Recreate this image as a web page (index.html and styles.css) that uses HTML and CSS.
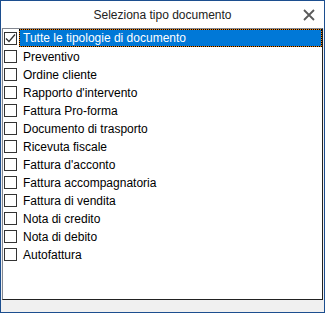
FILE: index.html
```html
<!DOCTYPE html>
<html lang="it">
<head>
<meta charset="UTF-8">
<title>Seleziona tipo documento</title>
<link rel="stylesheet" href="styles.css">
</head>
<body>
    <div class="window">
        <div class="title-bar">
            <span class="title">Seleziona tipo documento</span>
            <svg class="close-btn" width="12" height="12" viewBox="0 0 12 12">
                <path d="M1 1 L11 11 M11 1 L1 11" stroke="#5a5a5a" stroke-width="1.8" fill="none"/>
            </svg>
        </div>

        <!-- Checked list -->
        <ul class="list-box">
            <li class="item selected">
                <span class="check">
                    <svg width="11" height="11" viewBox="0 0 11 11">
                        <path d="M1 5.5 L4 8.5 L10 1.5" stroke="#333" stroke-width="1.3" fill="none"/>
                    </svg>
                </span>
                <span class="label">Tutte le tipologie di documento</span>
            </li>
            <li class="item"><span class="check"></span><span class="label">Preventivo</span></li>
            <li class="item"><span class="check"></span><span class="label">Ordine cliente</span></li>
            <li class="item"><span class="check"></span><span class="label">Rapporto d'intervento</span></li>
            <li class="item"><span class="check"></span><span class="label">Fattura Pro-forma</span></li>
            <li class="item"><span class="check"></span><span class="label">Documento di trasporto</span></li>
            <li class="item"><span class="check"></span><span class="label">Ricevuta fiscale</span></li>
            <li class="item"><span class="check"></span><span class="label">Fattura d'acconto</span></li>
            <li class="item"><span class="check"></span><span class="label">Fattura accompagnatoria</span></li>
            <li class="item"><span class="check"></span><span class="label">Fattura di vendita</span></li>
            <li class="item"><span class="check"></span><span class="label">Nota di credito</span></li>
            <li class="item"><span class="check"></span><span class="label">Nota di debito</span></li>
            <li class="item"><span class="check"></span><span class="label">Autofattura</span></li>
        </ul>
    </div>
</body>
</html>
```

FILE: styles.css
```css
body {
    margin: 0;
    padding: 0;
    font-family: "Liberation Sans", Arial, sans-serif;
    font-size: 12px;
    color: #000;
    background-color: #fff;
}

.window {
    width: 325px;
    height: 313px;
    box-sizing: border-box;
    border: 1px solid #1c4e8f;
    background-color: #f0f0f0;
    display: flex;
    flex-direction: column;
}

/* Title bar */
.title-bar {
    height: 27px;
    background-color: #fff;
    display: flex;
    align-items: center;
    justify-content: center;
    position: relative;
}

.title {
    color: #222;
    padding-top: 1px;
}

.close-btn {
    position: absolute;
    right: 9px;
    top: 8px;
}

/* List styles */
.list-box {
    list-style: none;
    margin: 0 1px;
    padding: 0;
    height: 272px;
    box-sizing: border-box;
    background-color: #fff;
    border: 1px solid #828790;
    border-right-color: #222;
    border-bottom-color: #222;
}

.item {
    height: 18px;
    display: flex;
    align-items: center;
}

.check {
    width: 11px;
    height: 11px;
    margin-left: 1px;
    margin-right: 2px;
    border: 1px solid #333;
    display: flex;
    align-items: center;
    justify-content: center;
    flex-shrink: 0;
}

.label {
    height: 18px;
    line-height: 18px;
    padding-left: 3px;
    flex: 1;
    box-sizing: border-box;
    border: 1px solid transparent;
}

.selected .label {
    color: #fff;
    border: 1px dotted #000;
    line-height: 16px;
    background: linear-gradient(#0078d7, #0078d7) padding-box, #f0820f border-box;
}
```
